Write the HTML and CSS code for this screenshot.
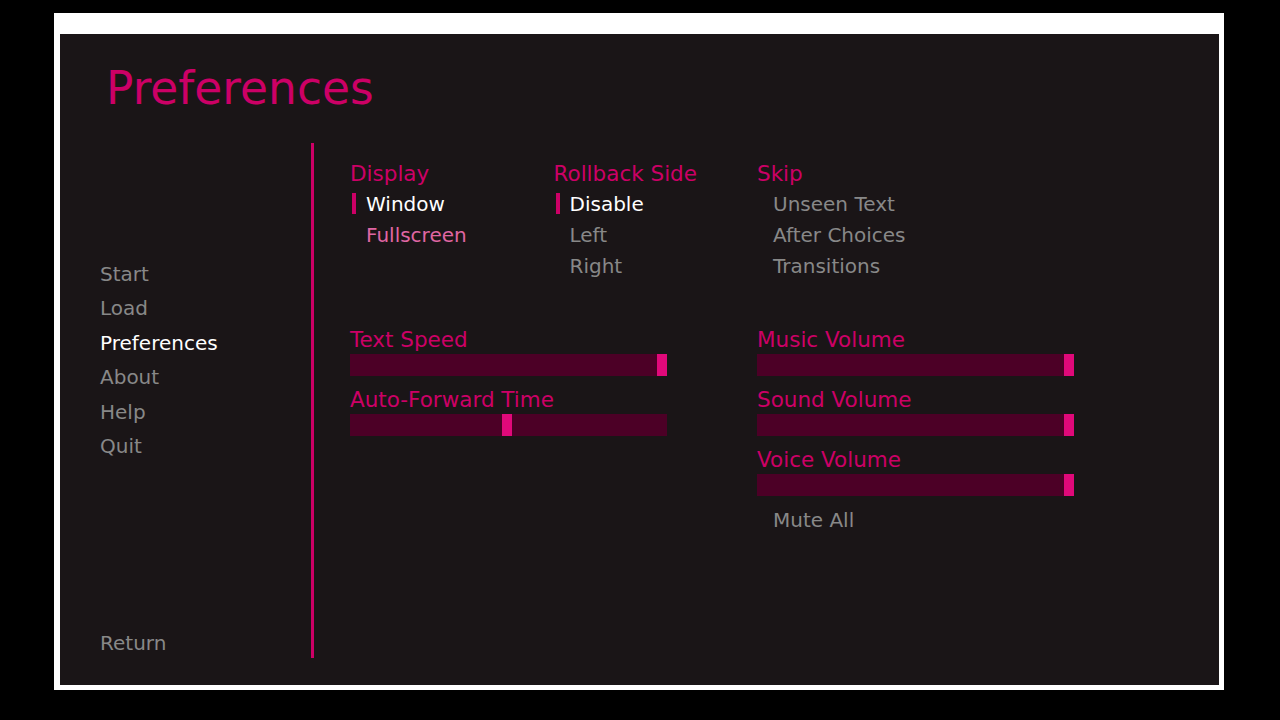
FILE: index.html
```html
<html lang="en">
<head>
    <meta charset="UTF-8">
    <meta name="viewport" content="width=device-width, initial-scale=1.0">
    <title>Preferences</title>
    <link rel="stylesheet" href="styles.css">
</head>
<body>
    <div class="frame">
        <div class="screen">
            <h1 class="title">Preferences</h1>
            <div class="main">
                <div class="nav">
                    <div class="nav-list">
                        <div class="nav-item">Start</div>
                        <div class="nav-item">Load</div>
                        <div class="nav-item selected">Preferences</div>
                        <div class="nav-item">About</div>
                        <div class="nav-item">Help</div>
                        <div class="nav-item">Quit</div>
                    </div>
                    <div class="nav-item nav-return">Return</div>
                </div>
                <div class="divider"></div>
                <div class="content">
                    <div class="choices">
                        <div class="group">
                            <div class="label">Display</div>
                            <div class="option selected"><span class="mark"></span>Window</div>
                            <div class="option hover"><span class="mark"></span>Fullscreen</div>
                        </div>
                        <div class="group">
                            <div class="label">Rollback Side</div>
                            <div class="option selected"><span class="mark"></span>Disable</div>
                            <div class="option"><span class="mark"></span>Left</div>
                            <div class="option"><span class="mark"></span>Right</div>
                        </div>
                        <div class="group">
                            <div class="label">Skip</div>
                            <div class="option"><span class="mark"></span>Unseen Text</div>
                            <div class="option"><span class="mark"></span>After Choices</div>
                            <div class="option"><span class="mark"></span>Transitions</div>
                        </div>
                    </div>
                    <div class="sliders">
                        <div class="slider-col">
                            <div class="slider">
                                <div class="label">Text Speed</div>
                                <div class="bar"><span class="fill" style="width: 307px"></span><span class="thumb"></span></div>
                            </div>
                            <div class="slider">
                                <div class="label">Auto-Forward Time</div>
                                <div class="bar"><span class="fill" style="width: 152px"></span><span class="thumb"></span></div>
                            </div>
                        </div>
                        <div class="slider-col">
                            <div class="slider">
                                <div class="label">Music Volume</div>
                                <div class="bar"><span class="fill" style="width: 307px"></span><span class="thumb"></span></div>
                            </div>
                            <div class="slider">
                                <div class="label">Sound Volume</div>
                                <div class="bar"><span class="fill" style="width: 307px"></span><span class="thumb"></span></div>
                            </div>
                            <div class="slider">
                                <div class="label">Voice Volume</div>
                                <div class="bar"><span class="fill" style="width: 307px"></span><span class="thumb"></span></div>
                            </div>
                            <div class="option mute"><span class="mark"></span>Mute All</div>
                        </div>
                    </div>
                </div>
            </div>
        </div>
    </div>
</body>
</html>
```

FILE: styles.css
```css
/* Ecran des préférences */
body {
    margin: 0;
    padding: 0;
    background: #000;
    font-family: "DejaVu Sans", sans-serif;
}
.frame {
    margin: 13px 0 0 54px;
    width: 1159px;
    height: 651px;
    padding: 21px 5px 5px 6px;
    background: #fff;
}
.screen {
    width: 1159px;
    height: 651px;
    background: #1a1517;
    display: flex;
    flex-direction: column;
}
.title {
    margin: 29px 0 0 46px;
    font-size: 45.5px;
    font-weight: normal;
    line-height: 52px;
    color: #cc0066;
}
.main {
    margin-top: 28px;
    height: 515px;
    display: flex;
}
.nav {
    width: 251px;
    display: flex;
    flex-direction: column;
    justify-content: space-between;
    padding-left: 40px;
    box-sizing: border-box;
}
.nav-list {
    padding-top: 114px;
}
.nav-item {
    font-size: 20px;
    height: 34.4px;
    line-height: 34.4px;
    color: #888888;
}
.nav-item.selected {
    color: #ffffff;
}
.nav-return {
    height: 30px;
    line-height: 30px;
}
.divider {
    width: 3px;
    background: #cc0066;
}
.content {
    padding: 16px 0 0 36px;
}
.choices {
    display: flex;
}
.group {
    width: 203.5px;
}
.label {
    font-size: 21.5px;
    height: 29px;
    line-height: 30px;
    color: #cc0066;
}
.option {
    display: flex;
    align-items: center;
    height: 31px;
    font-size: 20px;
    color: #888888;
}
.mark {
    width: 4px;
    height: 21px;
    margin: 0 10px 0 2px;
}
.option.selected {
    color: #ffffff;
}
.option.selected .mark {
    background: #cc0066;
}
.option.hover {
    color: #e066a3;
}
.sliders {
    display: flex;
    margin-top: 43.5px;
}
.slider-col {
    width: 407px;
}
.slider {
    margin-bottom: 9px;
}
.bar {
    display: flex;
    width: 317px;
    height: 22px;
    background: #4c0026;
}
.thumb {
    width: 10px;
    background: #e0097a;
}
.mute {
    margin-top: 9px;
}
```
